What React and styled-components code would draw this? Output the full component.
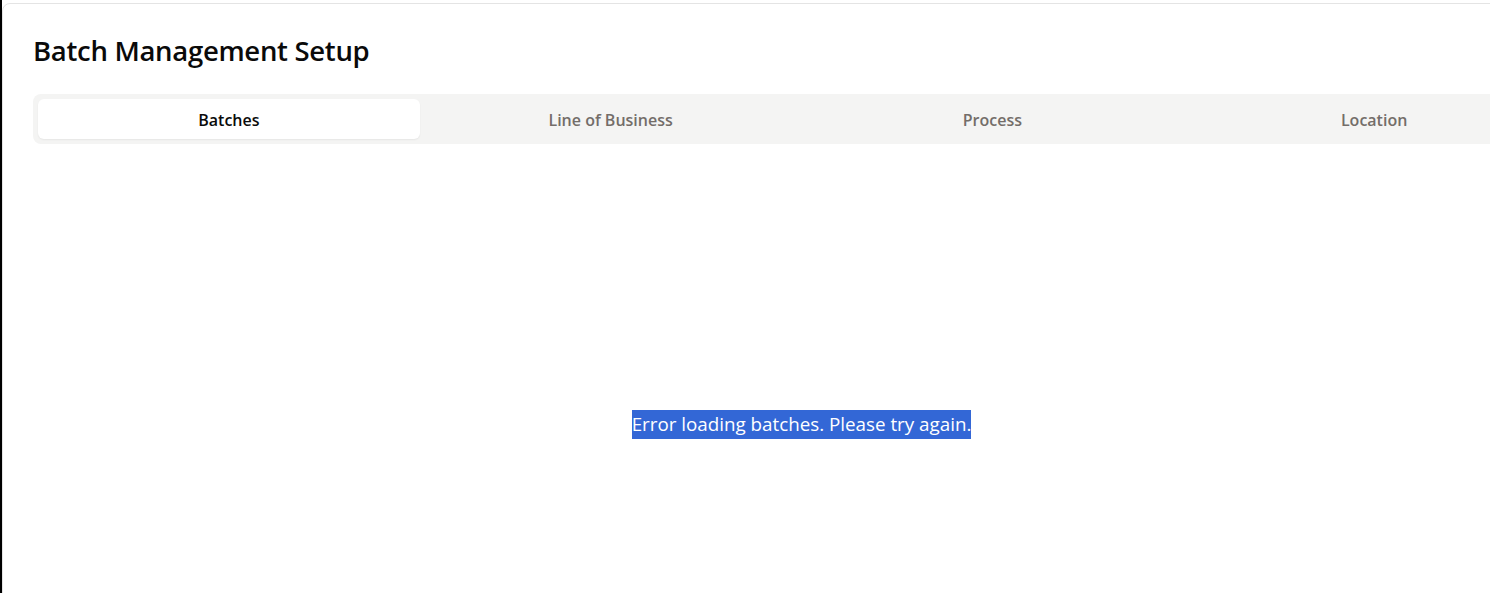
import React from "react";
import styled, { createGlobalStyle } from "styled-components";

const Global = createGlobalStyle`
  html, body {
    margin: 0;
    padding: 0;
    background: #ffffff;
    overflow: hidden;
    font-family: "Open Sans", "Noto Sans", "Liberation Sans", sans-serif;
  }
`;

const Frame = styled.div`
  border-left: 2px solid #000000;
  padding-top: 3px;
  height: 593px;
  overflow: hidden;
  box-sizing: border-box;
`;

const Card = styled.div`
  width: 1600px;
  min-height: 600px;
  box-sizing: border-box;
  border: 1px solid #e4e4e4;
  border-radius: 8px;
  background: #ffffff;
  padding: 26px 31px 32px 30px;
`;

const Title = styled.h1`
  margin: 0;
  font-size: 27.5px;
  font-weight: 600;
  color: #0a0a0a;
  line-height: 42px;
  letter-spacing: -0.3px;
`;

const TabList = styled.div`
  margin-top: 22px;
  display: grid;
  grid-template-columns: repeat(4, 1fr);
  padding: 5px;
  height: 50px;
  box-sizing: border-box;
  background: #f4f4f3;
  border-radius: 8px;
`;

const Tab = styled.button`
  border: none;
  border-radius: 6px;
  padding-top: 2px;
  font-family: inherit;
  font-size: 16px;
  font-weight: 600;
  cursor: pointer;
  background: ${(p) => (p.$active ? "#ffffff" : "transparent")};
  color: ${(p) => (p.$active ? "#0a0a0a" : "#736d69")};
  box-shadow: ${(p) => (p.$active ? "0 1px 2px rgba(0,0,0,0.06)" : "none")};
`;

const Content = styled.div`
  display: flex;
  justify-content: center;
  padding-top: 266px;
`;

const ErrorText = styled.span`
  font-size: 18.8px;
  line-height: 29px;
  color: #ffffff;
  background: #3367d6;
`;

const tabs = ["Batches", "Line of Business", "Process", "Location"];

export default function App() {
  return (
    <>
      <Global />
      <Frame>
        <Card>
          <Title>Batch Management Setup</Title>
          <TabList>
            {tabs.map((t, i) => (
              <Tab key={t} $active={i === 0}>
                {t}
              </Tab>
            ))}
          </TabList>
          <Content>
            <ErrorText>Error loading batches. Please try again.</ErrorText>
          </Content>
        </Card>
      </Frame>
    </>
  );
}
